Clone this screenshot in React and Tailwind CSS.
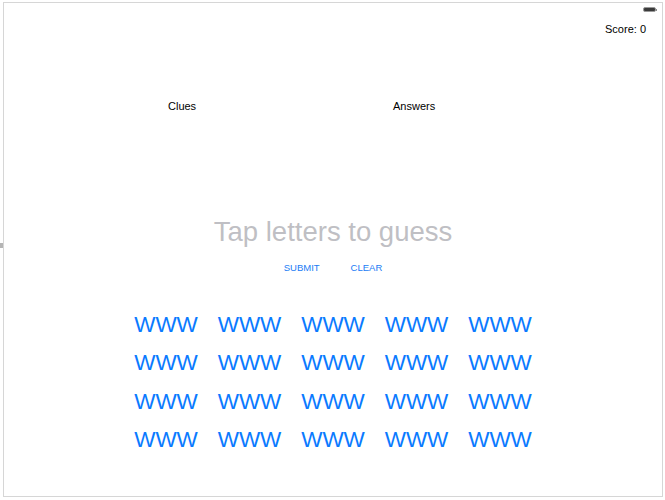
import React from "react";

const rows = [0, 1, 2, 3];
const cols = [0, 1, 2, 3, 4];

function Battery() {
  return (
    <div className="flex items-center">
      <div className="w-[13px] h-[5px] rounded-[2px] border border-[#9a9a9a] bg-[#3a3a3a]" />
      <div className="w-[1px] h-[2px] bg-[#8a8a8a]" />
    </div>
  );
}

export default function App() {
  return (
    <div
      className="relative w-[665px] h-[500px] bg-white overflow-hidden"
      style={{ fontFamily: '"Liberation Sans", Arial, sans-serif' }}
    >
      <div className="absolute left-0 top-[243px] w-[3px] h-[5px] bg-[#b5b5b5]" />
      <div className="mt-[2px] ml-[3px] w-[660px] h-[495px] border border-[#d6d6d6] flex flex-col">
        <div className="flex justify-end pr-[5px] mt-[4px]">
          <Battery />
        </div>
        <div className="flex justify-end pr-[16px] mt-[10px]">
          <span className="text-[11px] leading-[14px] text-black">Score: 0</span>
        </div>
        <div className="flex mt-[63px] pl-[164px] text-[11px] leading-[14px] text-black">
          <span className="w-[225px]">Clues</span>
          <span>Answers</span>
        </div>
        <div className="mt-[102px] text-center text-[27.5px] leading-[33px] text-[#bfbfc4]">
          Tap letters to guess
        </div>
        <div className="mt-[14px] flex justify-center gap-[31px] text-[9.5px] leading-[12px] font-medium text-[#1a7cf5]">
          <span>SUBMIT</span>
          <span>CLEAR</span>
        </div>
        <div className="mt-[32px] mx-auto w-[398px] grid grid-cols-[repeat(5,64px)] justify-between">
          {rows.map((r) =>
            cols.map((c) => (
              <div
                key={r + "-" + c}
                className="text-center text-[22.5px] leading-[38.3px] text-[#0a7aff]"
              >
                WWW
              </div>
            ))
          )}
        </div>
      </div>
    </div>
  );
}
